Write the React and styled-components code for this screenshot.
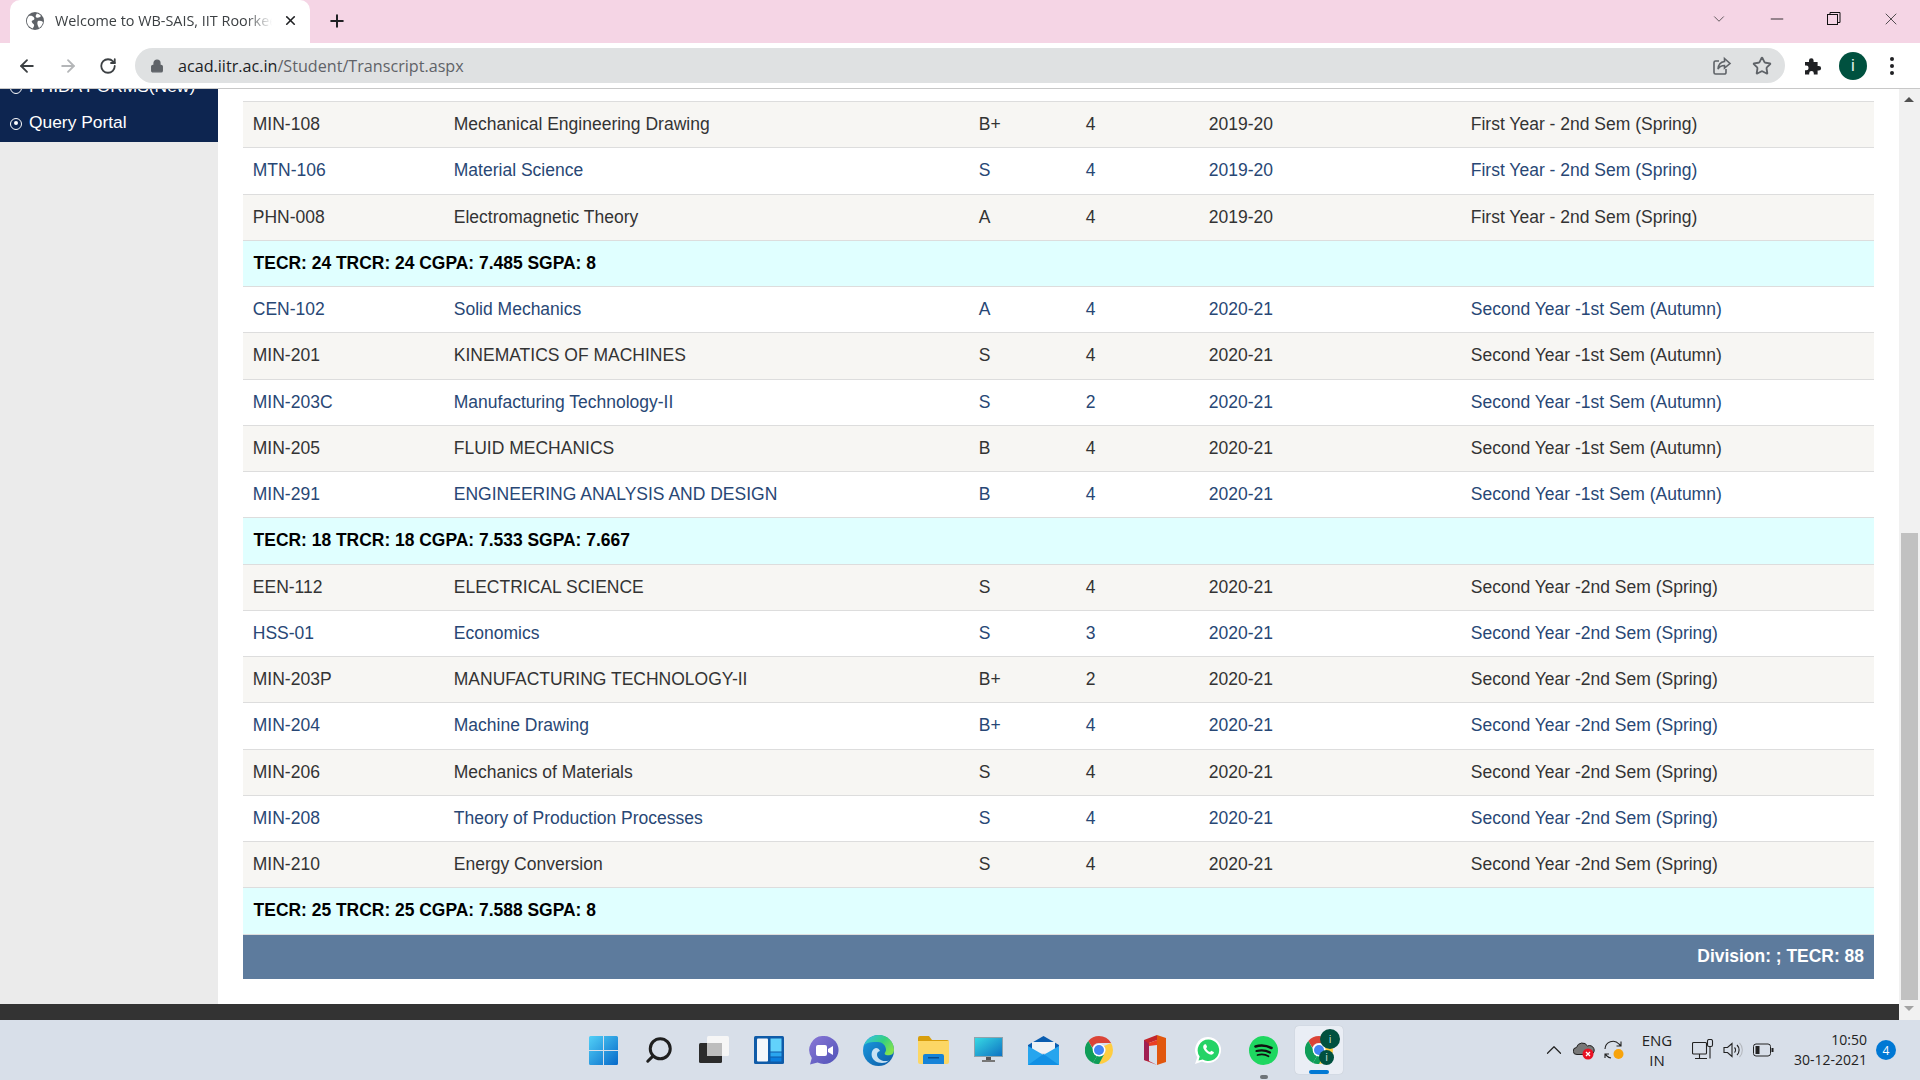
import React from "react"
import styled, { createGlobalStyle } from "styled-components"
import { ArrowLeft, ArrowRight, RotateCw, Plus, X, Lock, Star, Search, ChevronDown, ChevronUp, Minus } from "lucide-react"

const GlobalStyle = createGlobalStyle`
html, body { margin:0; padding:0; overflow:hidden; }
body { font-family:"Liberation Sans", Arial, sans-serif; }
* { box-sizing:border-box; }
`

const rows = [
  ["MIN-108", "Mechanical Engineering Drawing", "B+", "4", "2019-20", "First Year - 2nd Sem (Spring)"],
  ["MTN-106", "Material Science", "S", "4", "2019-20", "First Year - 2nd Sem (Spring)"],
  ["PHN-008", "Electromagnetic Theory", "A", "4", "2019-20", "First Year - 2nd Sem (Spring)"],
  { sum: "TECR: 24 TRCR: 24 CGPA: 7.485 SGPA: 8" },
  ["CEN-102", "Solid Mechanics", "A", "4", "2020-21", "Second Year -1st Sem (Autumn)"],
  ["MIN-201", "KINEMATICS OF MACHINES", "S", "4", "2020-21", "Second Year -1st Sem (Autumn)"],
  ["MIN-203C", "Manufacturing Technology-II", "S", "2", "2020-21", "Second Year -1st Sem (Autumn)"],
  ["MIN-205", "FLUID MECHANICS", "B", "4", "2020-21", "Second Year -1st Sem (Autumn)"],
  ["MIN-291", "ENGINEERING ANALYSIS AND DESIGN", "B", "4", "2020-21", "Second Year -1st Sem (Autumn)"],
  { sum: "TECR: 18 TRCR: 18 CGPA: 7.533 SGPA: 7.667" },
  ["EEN-112", "ELECTRICAL SCIENCE", "S", "4", "2020-21", "Second Year -2nd Sem (Spring)"],
  ["HSS-01", "Economics", "S", "3", "2020-21", "Second Year -2nd Sem (Spring)"],
  ["MIN-203P", "MANUFACTURING TECHNOLOGY-II", "B+", "2", "2020-21", "Second Year -2nd Sem (Spring)"],
  ["MIN-204", "Machine Drawing", "B+", "4", "2020-21", "Second Year -2nd Sem (Spring)"],
  ["MIN-206", "Mechanics of Materials", "S", "4", "2020-21", "Second Year -2nd Sem (Spring)"],
  ["MIN-208", "Theory of Production Processes", "S", "4", "2020-21", "Second Year -2nd Sem (Spring)"],
  ["MIN-210", "Energy Conversion", "S", "4", "2020-21", "Second Year -2nd Sem (Spring)"],
  { sum: "TECR: 25 TRCR: 25 CGPA: 7.588 SGPA: 8" },
]

// first row of the list is grey, then it alternates; summary rows keep their own colour
const altFlags = [false, true, false, null, true, false, true, false, true, null, false, true, false, true, false, true, false, null]

export default function App() {
  return (
    <Screen>
      <GlobalStyle />
      <TabStrip>
        <Tab>
          <GlobeIcon />
          <TabTitle>Welcome to WB-SAIS, IIT Roorkee</TabTitle>
          <X size={15} strokeWidth={2.6} color="#202124" />
        </Tab>
        <NewTab><Plus size={20} strokeWidth={2.4} color="#202124" /></NewTab>
        <WindowButtons>
          <ChevronDown size={18} strokeWidth={1} color="#333" />
          <Minus size={20} strokeWidth={1} color="#111" />
          <RestoreIcon />
          <X size={20} strokeWidth={1} color="#333" />
        </WindowButtons>
      </TabStrip>
      <Toolbar>
        <NavButtons>
          <ArrowLeft size={20} strokeWidth={2.2} color="#3c4043" />
          <ArrowRight size={20} strokeWidth={2.2} color="#b4b6b8" />
          <RotateCw size={18} strokeWidth={2.4} color="#3c4043" />
        </NavButtons>
        <Omnibox>
          <Lock size={14} strokeWidth={2.4} color="#5f6368" fill="#5f6368" />
          <Url>acad.iitr.ac.in<span>/Student/Transcript.aspx</span></Url>
          <OmniIcons>
            <ShareIcon />
            <Star size={20} strokeWidth={2.2} color="#5f6368" />
          </OmniIcons>
        </Omnibox>
        <ToolIcons>
          <PuzzleIcon />
          <Avatar>i</Avatar>
          <Dots><i /><i /><i /></Dots>
        </ToolIcons>
      </Toolbar>
      <Viewport>
        <Page>
          <Body>
            <Sidebar>
              <SideMenu>
                <SideItem><Bullet />PHIDA FORMS(New)</SideItem>
                <SideItem><Bullet />Query Portal</SideItem>
              </SideMenu>
            </Sidebar>
            <Content>
              <Table>
                <tbody>
                  {rows.map((r, i) =>
                    r.sum ? (
                      <SumRow key={i}><td colSpan={6}>{r.sum}</td></SumRow>
                    ) : (
                      <DataRow key={i} $alt={altFlags[i]}>
                        {r.map((c, j) => <td key={j}>{c}</td>)}
                      </DataRow>
                    )
                  )}
                  <FootRow><td colSpan={6}>Division: ; TECR: 88</td></FootRow>
                </tbody>
              </Table>
            </Content>
          </Body>
          <PageFooter />
        </Page>
        <Scrollbar>
          <ScrollArrow $up />
          <ScrollTrack><ScrollThumb /></ScrollTrack>
          <ScrollArrow />
        </Scrollbar>
      </Viewport>
      <Taskbar>
        <TaskIcons>
          <TaskSlot><WinLogo /></TaskSlot>
          <TaskSlot><SearchGlyph size={30} strokeWidth={2.4} color="#1f1f1f" /></TaskSlot>
          <TaskSlot><TaskViewIcon /></TaskSlot>
          <TaskSlot><WidgetsIcon /></TaskSlot>
          <TaskSlot><ChatIcon /></TaskSlot>
          <TaskSlot><EdgeIcon /></TaskSlot>
          <TaskSlot><FolderIcon /></TaskSlot>
          <TaskSlot><MonitorIcon /></TaskSlot>
          <TaskSlot><MailIcon /></TaskSlot>
          <TaskSlot><ChromeIcon size={28} /></TaskSlot>
          <TaskSlot><OfficeIcon /></TaskSlot>
          <TaskSlot><WhatsappIcon /></TaskSlot>
          <TaskSlot $dot><SpotifyIcon /></TaskSlot>
          <ActiveSlot>
            <ChromeIcon size={28} />
            <ProfileBadge $top>i</ProfileBadge>
            <ProfileBadge>i</ProfileBadge>
            <ActiveBar />
          </ActiveSlot>
        </TaskIcons>
        <Tray>
          <TraySlot><ChevronUp size={26} strokeWidth={1.1} color="#222" /></TraySlot>
          <TraySlot><CloudIcon /></TraySlot>
          <TraySlot><SyncIcon /></TraySlot>
          <Lang><span>ENG</span><span>IN</span></Lang>
          <TraySlot><NetworkIcon /></TraySlot>
          <TraySlot><SpeakerIcon /></TraySlot>
          <TraySlot><BatteryIcon /></TraySlot>
          <Clock><span>10:50</span><span>30-12-2021</span></Clock>
          <Notif>4</Notif>
        </Tray>
      </Taskbar>
    </Screen>
  )
}

/* small drawings */
const GlobeIcon = () => (
  <svg width="18" height="18" viewBox="0 0 18 18">
    <circle cx="9" cy="9" r="9" fill="#5f6368" />
    <path d="M3 4c2-.5 4 0 5 1.500S8 8 6.500 8.500 6 11 7.500 12s0 3.500-1 4.500C3 15 .5 12 1 8c.2-1.500 1-3 2-4zM11 1.500c2 .5 3 1.500 4 2.500-1 1.500-3 2-4.500 1.500S10 2.500 11 1.500zM12 9c2-.5 3.500 0 5 1-.3 2.500-2 5-4 6-1-2-2.500-5-1-7z" fill="#fff" />
  </svg>
)

const RestoreIcon = () => (
  <svg width="16" height="16" viewBox="0 0 16 16" fill="none" stroke="#111" strokeWidth="1">
    <rect x="1.500" y="3.500" width="10" height="10" />
    <path d="M4 3.500V1.500h10v10h-2.500" />
  </svg>
)

const ShareIcon = () => (
  <svg width="20" height="20" viewBox="0 0 20 20" fill="none" stroke="#5f6368" strokeWidth="1.600">
    <path d="M14 13v3.500a1.500 1.500 0 0 1-1.500 1.500h-9A1.500 1.500 0 0 1 2 16.500v-10A1.500 1.500 0 0 1 3.500 5H7" />
    <path d="M12.500 2.500 18 7.500 12.500 12V9.500C9.500 9.500 7.500 10.500 6 13c.3-4 3-7 6.500-7.500z" />
  </svg>
)

const PuzzleIcon = () => (
  <svg width="18" height="18" viewBox="0 0 18 18">
    <path d="M1 5h4V3.500a2.300 2.300 0 0 1 4.600 0V5h4v4h1.200a2.300 2.300 0 0 1 0 4.600h-1.200V17.500H9.800v-1.300a2.300 2.300 0 0 0-4.600 0v1.300H1v-4.300h1.300a2.300 2.300 0 0 0 0-4.600H1z" fill="#202124" />
  </svg>
)

const WinLogo = () => (
  <svg width="29" height="29" viewBox="0 0 29 29">
    <defs>
      <linearGradient id="win" x1="0" y1="0" x2="1" y2="1">
        <stop offset="0" stopColor="#52d0f7" />
        <stop offset="1" stopColor="#0669c9" />
      </linearGradient>
    </defs>
    <path d="M1.500 0H14v14H0V1.500A1.500 1.500 0 0 1 1.500 0zM15 0h12.500A1.500 1.500 0 0 1 29 1.500V14H15zM0 15h14v14H1.500A1.500 1.500 0 0 1 0 27.500zM15 15h14v12.500a1.500 1.500 0 0 1-1.500 1.500H15z" fill="url(#win)" />
  </svg>
)

const TaskViewIcon = () => (
  <svg width="30" height="30" viewBox="0 0 30 30">
    <rect x="8" y="1" width="22" height="20" rx="1.500" fill="#f6f6f6" />
    <rect x="0" y="8" width="23" height="20" rx="1.500" fill="#2b2b2b" />
    <rect x="8" y="8" width="15" height="13" fill="#bdbdbd" />
  </svg>
)

const WidgetsIcon = () => (
  <svg width="30" height="28" viewBox="0 0 30 28">
    <rect width="30" height="28" rx="1.500" fill="#0f5ba8" />
    <rect x="3" y="2.500" width="11" height="23" rx="1" fill="#f5f7fa" />
    <rect x="16.500" y="2.500" width="11" height="13" fill="#62d2fb" />
    <rect x="16.500" y="16.500" width="11" height="4" fill="#2aa6ef" />
    <rect x="16.500" y="21.500" width="11" height="4" fill="#0b7fde" />
  </svg>
)

const ChatIcon = () => (
  <svg width="30" height="29" viewBox="0 0 30 29">
    <defs>
      <linearGradient id="chat" x1="0" y1="0" x2="1" y2="1">
        <stop offset="0" stopColor="#8a78d6" />
        <stop offset="1" stopColor="#4f52b8" />
      </linearGradient>
    </defs>
    <path d="M15 0a14.500 14 0 1 1-6.500 26.500L1 28.500l1.800-6.500A14 14 0 0 1 15 0z" fill="url(#chat)" />
    <rect x="7" y="9" width="11" height="11" rx="2" fill="#fff" />
    <path d="M19 13l5-3v9l-5-3z" fill="#fff" />
  </svg>
)

const EdgeIcon = () => (
  <svg width="31" height="31" viewBox="0 0 31 31">
    <defs>
      <linearGradient id="edgeA" x1="0" y1="0" x2="1" y2="1">
        <stop offset="0" stopColor="#1b9de2" />
        <stop offset="1" stopColor="#0c59a4" />
      </linearGradient>
      <linearGradient id="edgeB" x1="0" y1="0" x2="1" y2="0.600">
        <stop offset="0" stopColor="#35c1f1" />
        <stop offset="0.600" stopColor="#35d07f" />
        <stop offset="1" stopColor="#7fe24f" />
      </linearGradient>
    </defs>
    <circle cx="15.500" cy="15.500" r="15.500" fill="url(#edgeA)" />
    <path d="M1 11C3 4 9 0 15.500 0 24 0 31 6 31 15c0 5-5 6-8 5-3-1 0-3 0-5 0-5-4-8-8-8-6 0-12 0-14 4z" fill="url(#edgeB)" />
    <path d="M13 13c-4 1-5 5-4 9 1 3 5 6 10 6 3 0 5-.800 7-2.500-7 2-12-2-12-6 0-2 1-3 3-3.500-1-2-2-3-4-3z" fill="#e6f3fb" opacity=".85" />
  </svg>
)

const FolderIcon = () => (
  <svg width="31" height="28" viewBox="0 0 31 28">
    <path d="M0 2a2 2 0 0 1 2-2h9l3 4h15a2 2 0 0 1 2 2v3H0z" fill="#d89e0c" />
    <path d="M0 5h31v21a2 2 0 0 1-2 2H2a2 2 0 0 1-2-2z" fill="#fcd765" />
    <path d="M5 28v-8a2 2 0 0 1 2-2h17a2 2 0 0 1 2 2v8z" fill="#1683d8" />
    <rect x="10" y="21" width="11" height="1.500" fill="#0b4e8e" />
  </svg>
)

const MonitorIcon = () => (
  <svg width="29" height="26" viewBox="0 0 29 26">
    <defs>
      <linearGradient id="mon" x1="0" y1="0" x2="1" y2="1">
        <stop offset="0" stopColor="#38dbe4" />
        <stop offset="1" stopColor="#0d70c2" />
      </linearGradient>
    </defs>
    <rect x="0.500" y="0.500" width="28" height="19" fill="url(#mon)" stroke="#8fa3ad" />
    <rect x="12" y="20" width="5" height="3" fill="#555" />
    <rect x="8" y="23" width="13" height="2" fill="#777" />
  </svg>
)

const MailIcon = () => (
  <svg width="31" height="29" viewBox="0 0 31 29">
    <path d="M0 9 15.500 0 31 9v4H0z" fill="#0a5db0" />
    <path d="M4 6h23v11H4z" fill="#eef2f6" />
    <path d="M0 10l15.500 9L31 10v19H0z" fill="#26a5ee" />
    <path d="M0 29 15.500 18 31 29z" fill="#1190e4" />
  </svg>
)

const ChromeIcon = ({ size }) => (
  <svg width={size} height={size} viewBox="0 0 28 28">
    <path d="M14 0a14 14 0 0 1 12.100 7H14a7 7 0 0 0-6.600 4.700L3.300 5A14 14 0 0 1 14 0z" fill="#db4437" />
    <path d="M3.300 5l5 8.800A6.300 6.300 0 0 0 12 20l-4 7A14 14 0 0 1 3.300 5z" fill="#0f9d58" />
    <path d="M26.100 7A14 14 0 0 1 14 28h-.8l5.700-9.500A7 7 0 0 0 19 10z" fill="#ffcd40" />
    <path d="M8 27l4-7a7 7 0 0 0 7-1.500L14 28a14 14 0 0 1-6-1z" fill="#0f9d58" />
    <circle cx="14" cy="14" r="6.300" fill="#fff" />
    <circle cx="14" cy="14" r="5" fill="#4285f4" />
  </svg>
)

const OfficeIcon = () => (
  <svg width="24" height="30" viewBox="0 0 24 30">
    <path d="M15 0 24 3v24l-9 3z" fill="#e1570e" />
    <path d="M15 0 2 5v20l13 5-8-4V8l8-3z" fill="#c3262c" />
    <path d="M2 5v20l5 1V9z" fill="#a01f52" />
    <path d="M15 5 7 8v3l8-1z" fill="#ea3e23" />
  </svg>
)

const WhatsappIcon = () => (
  <svg width="27" height="27" viewBox="0 0 27 27">
    <path d="M13.500 0a13 13 0 1 1-6.500 24.500L0 27l2.300-6.800A13 13 0 0 1 13.500 0z" fill="#fff" />
    <path d="M13.500 2.500a10.800 10.800 0 1 1-5.800 20L3.500 23.500l1.200-4A10.800 10.800 0 0 1 13.500 2.500z" fill="#25d366" />
    <path d="M9.500 7.500c-1 .5-1.700 2-1 4 1 2.500 3.500 5 6.500 6 1.500.4 3 0 3.700-1.200.3-.6.300-1.200 0-1.400l-2.500-1.200-1.100 1.300c-2-.7-3.400-2.200-4-3.800l1-1.100-1-2.500c-.3-.4-1.600-.4-1.600-.1z" fill="#fff" />
  </svg>
)

const SpotifyIcon = () => (
  <svg width="29" height="29" viewBox="0 0 29 29" fill="none" stroke="#111" strokeLinecap="round">
    <circle cx="14.500" cy="14.500" r="14.500" fill="#1ed760" stroke="none" />
    <path d="M6.500 10.500c5-1.500 11-1 16 1.500" strokeWidth="2.600" />
    <path d="M7.500 15c4.500-1.200 9.500-.800 13.500 1.500" strokeWidth="2.200" />
    <path d="M8.500 19c4-1 8-.6 11 1.200" strokeWidth="1.800" />
  </svg>
)

const CloudIcon = () => (
  <svg width="22" height="20" viewBox="0 0 22 20">
    <path d="M4 14.500a3.500 3.500 0 0 1-.500-7A6 6 0 0 1 14.500 6a4.500 4.500 0 0 1 4 8.500z" fill="#777" stroke="#222" strokeWidth="1" />
    <circle cx="15" cy="14" r="5.500" fill="#e81123" />
    <path d="M13 12l4 4M17 12l-4 4" stroke="#fff" strokeWidth="1.300" />
  </svg>
)

const SyncIcon = () => (
  <svg width="22" height="22" viewBox="0 0 22 22" fill="none" stroke="#222" strokeWidth="1.100">
    <path d="M2 10a8 8 0 0 1 14-5l2 2M18 2.500V7h-4.500" />
    <path d="M2 19v-4h4M2 15l2 2a8 8 0 0 0 4 2" />
    <circle cx="15.500" cy="15" r="5" fill="#f7a30c" stroke="none" />
  </svg>
)

const NetworkIcon = () => (
  <svg width="22" height="22" viewBox="0 0 22 22" fill="none" stroke="#222" strokeWidth="1.100">
    <rect x="0.500" y="3.500" width="14" height="11.500" rx="1" />
    <path d="M7.500 15v4M3 19.500h12" />
    <rect x="15.500" y="0.500" width="5" height="7" rx="1.500" fill="#d8dfe9" />
    <path d="M18 7.500V19.500" />
  </svg>
)

const SpeakerIcon = () => (
  <svg width="21" height="18" viewBox="0 0 21 18" fill="none" stroke="#222" strokeWidth="1.100">
    <path d="M1 6.500h3.500L9 2.500v13l-4.500-4H1z" />
    <path d="M11.500 6.500a3.500 3.500 0 0 1 0 5M14 4a7 7 0 0 1 0 10" />
    <path d="M16.500 1.800a10.500 10.500 0 0 1 0 14.400" stroke="#b5b9bf" />
  </svg>
)

const BatteryIcon = () => (
  <svg width="21" height="14" viewBox="0 0 21 14" fill="none">
    <rect x="0.500" y="1" width="17" height="12" rx="2.500" stroke="#222" />
    <rect x="2.500" y="3" width="4" height="8" fill="#222" />
    <rect x="18.500" y="5" width="2" height="4" fill="#222" />
  </svg>
)

/* layout */
const Screen = styled.div`
width:1920px;
height:1080px;
display:flex;
flex-direction:column;
overflow:hidden;
background:#fff;
`
const TabStrip = styled.div`
height:43px;
flex:none;
background:#f5d5e5;
display:flex;
align-items:flex-end;
padding-left:10px;
`
const Tab = styled.div`
width:300px;
height:43px;
background:#fff;
border-radius:10px 10px 0 0;
display:flex;
align-items:center;
padding:0 12px 2px 16px;
gap:11px;
`
const TabTitle = styled.div`
flex:1;
min-width:0;
font-family:"Open Sans", sans-serif;
font-size:14.400px;
color:#3c4043;
white-space:nowrap;
overflow:hidden;
mask-image:linear-gradient(to right, #000 88%, transparent 100%);
`
const NewTab = styled.div`
width:40px;
height:43px;
margin-left:7px;
display:flex;
align-items:center;
justify-content:center;
padding-bottom:2px;
`
const WindowButtons = styled.div`
margin-left:auto;
height:43px;
display:flex;
align-items:center;
gap:39px;
padding:0 19px 6px 0;
`
const SearchGlyph = styled(Search)`
transform:scaleX(-1);
`
const Toolbar = styled.div`
height:46px;
flex:none;
background:#fff;
border-bottom:1px solid #c8c8c8;
display:flex;
align-items:center;
`
const NavButtons = styled.div`
width:135px;
display:flex;
align-items:center;
gap:21px;
padding-left:17px;
`
const Omnibox = styled.div`
width:1650px;
height:35px;
background:#dfe1e2;
border-radius:18px;
display:flex;
align-items:center;
padding-left:15px;
gap:14px;
`
const Url = styled.div`
font-family:"Open Sans", sans-serif;
font-size:16.150px;
color:#202124;
span { color:#5f6368; }
`
const OmniIcons = styled.div`
margin-left:auto;
display:flex;
align-items:center;
gap:20px;
padding-right:13px;
`
const ToolIcons = styled.div`
flex:1;
display:flex;
align-items:center;
padding-left:19px;
gap:17px;
`
const Avatar = styled.div`
width:28px;
height:28px;
border-radius:50%;
background:#00513f;
color:#e4f1ec;
font-size:17px;
display:flex;
align-items:center;
justify-content:center;
`
const Dots = styled.div`
display:flex;
flex-direction:column;
gap:3px;
margin-left:6px;
i { width:4px; height:4px; border-radius:50%; background:#202124; display:block; }
`
const Viewport = styled.div`
flex:1;
min-height:0;
display:flex;
`
const Page = styled.div`
flex:1;
display:flex;
flex-direction:column;
`
const Body = styled.div`
flex:1;
min-height:0;
display:flex;
`
const Sidebar = styled.div`
width:218px;
flex:none;
background:#ebebeb;
`
const SideMenu = styled.div`
height:53px;
background:#0d2550;
overflow:hidden;
display:flex;
flex-direction:column;
justify-content:flex-end;
`
const SideItem = styled.div`
height:39px;
flex:none;
display:flex;
align-items:center;
gap:7px;
padding:0 0 0 10px;
color:#fff;
font-size:17.400px;
& + & { margin-top:-3px; }
`
const Bullet = styled.span`
width:12px;
height:12px;
margin-top:2px;
border-radius:50%;
border:1.500px solid #fff;
position:relative;
&::after {
  content:"";
  position:absolute;
  left:2.500px;
  top:2.500px;
  width:4px;
  height:4px;
  border-radius:50%;
  background:#fff;
}
`
const Content = styled.div`
flex:1;
padding:12px 0 0 25px;
`
const Table = styled.table`
width:1631px;
table-layout:fixed;
border-collapse:collapse;
font-size:17.500px;
td { padding:0 0 0 9.800px; white-space:nowrap; }
td:nth-child(1) { width:201px; }
td:nth-child(2) { width:525px; }
td:nth-child(3) { width:107px; }
td:nth-child(4) { width:123px; }
td:nth-child(5) { width:262px; }
`
const DataRow = styled.tr`
height:46.250px;
background:${p => (p.$alt ? "#fff" : "#f7f6f3")};
color:${p => (p.$alt ? "#284775" : "#333")};
border-top:1px solid #dddddd;
border-bottom:1px solid #dddddd;
`
const SumRow = styled.tr`
height:46.250px;
background:#e0ffff;
color:#000;
font-weight:bold;
font-size:17.450px;
border-bottom:1px solid #dddddd;
td { padding-left:10.600px; }
`
const FootRow = styled.tr`
height:45px;
background:#5d7b9d;
color:#fff;
font-weight:bold;
font-size:17.450px;
td { text-align:right; padding-right:10px; }
`
const PageFooter = styled.div`
height:16px;
flex:none;
background:#333;
`
const Scrollbar = styled.div`
width:21px;
flex:none;
background:#f1f1f1;
display:flex;
flex-direction:column;
`
const ScrollArrow = styled.div`
height:${p => (p.$up ? "16px" : "20px")};
flex:none;
position:relative;
&::after {
  content:"";
  position:absolute;
  left:5px;
  top:${p => (p.$up ? "8px" : "6px")};
  border-left:5px solid transparent;
  border-right:5px solid transparent;
  ${p => (p.$up ? "border-bottom:5px solid #505050;" : "border-top:5px solid #a3a3a3;")}
}
`
const ScrollTrack = styled.div`
flex:1;
padding:428px 2px 0 2px;
display:flex;
`
const ScrollThumb = styled.div`
flex:1;
background:#c1c1c1;
`
const Taskbar = styled.div`
height:60px;
flex:none;
background:#d8dfe9;
display:flex;
align-items:center;
position:relative;
`
const TaskIcons = styled.div`
margin-left:576px;
display:flex;
align-items:center;
`
const TaskSlot = styled.div`
width:55px;
height:54px;
display:flex;
align-items:center;
justify-content:center;
position:relative;
${p => p.$dot && `&::after {
  content:"";
  position:absolute;
  bottom:-2px;
  left:24px;
  width:8px;
  height:4px;
  border-radius:2px;
  background:#6e7378;
}`}
`
const ActiveSlot = styled.div`
width:48px;
height:48px;
margin-left:4px;
border-radius:4px;
background:#eaeef5;
box-shadow:0 0 1px rgba(0,0,0,.2);
display:flex;
align-items:center;
justify-content:center;
position:relative;
`
const ProfileBadge = styled.div`
position:absolute;
width:${p => (p.$top ? "20px" : "15px")};
height:${p => (p.$top ? "20px" : "15px")};
border-radius:50%;
background:#00513f;
color:#cfe3dc;
font-size:10px;
display:flex;
align-items:center;
justify-content:center;
${p => (p.$top ? "top:3px;right:3px;" : "top:24px;right:9px;")}
`
const ActiveBar = styled.div`
position:absolute;
left:14px;
bottom:0;
width:20px;
height:4px;
border-radius:2px;
background:#0078d4;
`
const Tray = styled.div`
margin-left:auto;
display:flex;
align-items:center;
color:#222;
font-family:"Open Sans", sans-serif;
font-size:14px;
padding-right:24px;
`
const TraySlot = styled.div`
width:30px;
display:flex;
align-items:center;
justify-content:center;
`
const Lang = styled.div`
width:52px;
margin:0 5px 0 2px;
display:flex;
flex-direction:column;
align-items:center;
line-height:20px;
font-size:15px;
`
const Clock = styled.div`
width:85px;
margin-left:4px;
display:flex;
flex-direction:column;
align-items:flex-end;
line-height:20px;
`
const Notif = styled.div`
width:20px;
height:20px;
margin-left:9px;
border-radius:50%;
background:#0078d4;
color:#fff;
font-size:12px;
display:flex;
align-items:center;
justify-content:center;
`
